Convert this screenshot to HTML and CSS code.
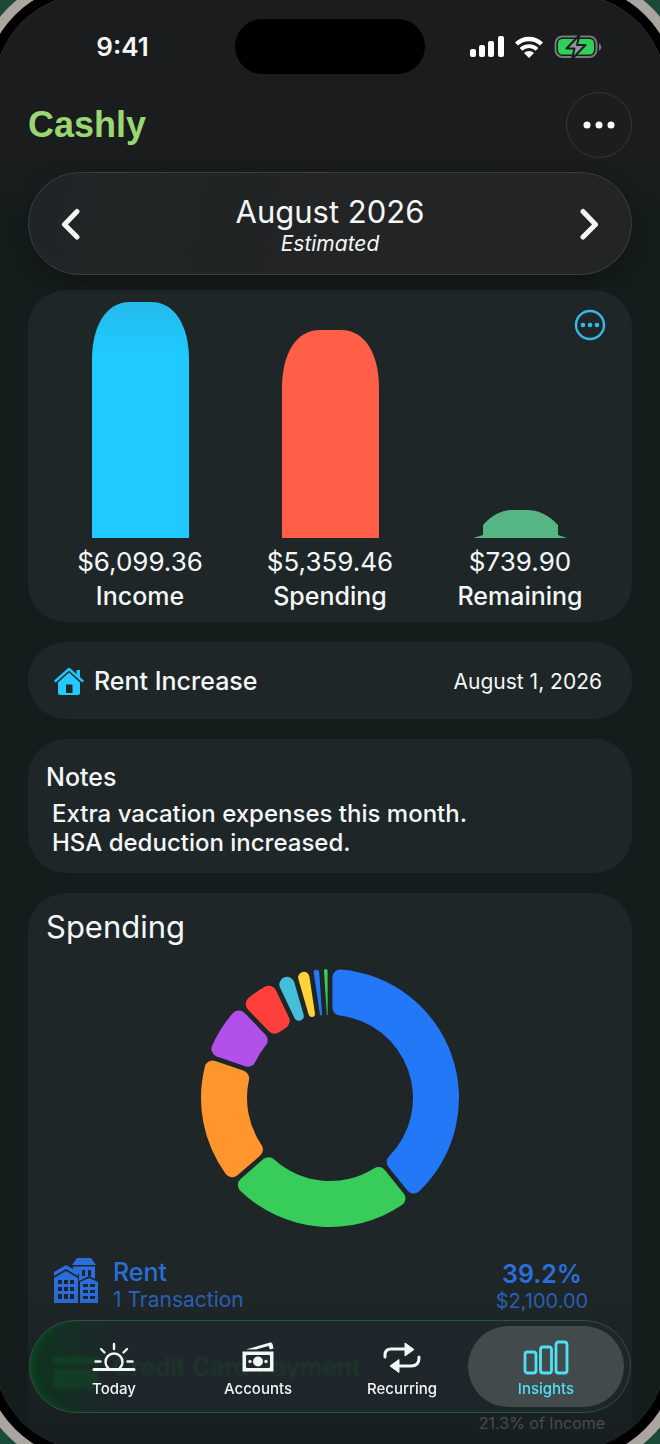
FILE: index.html
```html
<!DOCTYPE html>
<html lang="en">
<head>
    <meta charset="UTF-8">
    <meta name="viewport" content="width=device-width, initial-scale=1.0">
    <title>Cashly - Insights</title>
    <link rel="stylesheet" href="styles.css">
</head>
<body>
    <div class="phone">
        <div class="status-bar">
            <span class="time">9:41</span>
            <span class="island"></span>
            <span class="status-icons">
                <svg width="34" height="22" viewBox="0 0 34 22" fill="#fff">
                    <rect x="0" y="13" width="6" height="8" rx="2"/>
                    <rect x="9" y="9" width="6" height="12" rx="2"/>
                    <rect x="18" y="5" width="6" height="16" rx="2"/>
                    <rect x="28" y="0" width="6" height="21" rx="2"/>
                </svg>
                <svg width="30" height="22" viewBox="0 0 30 22" fill="none" stroke="#fff" stroke-width="4.400">
                    <path d="M2.500 8a18 18 0 0 1 25 0"/>
                    <path d="M7 13.300a11.500 11.500 0 0 1 16 0" stroke-width="3.800"/>
                    <path d="M15 22l-5-5a7 7 0 0 1 10 0z" fill="#fff" stroke="none"/>
                </svg>
                <svg width="48" height="24" viewBox="0 0 48 24">
                    <rect x="1.500" y="1.500" width="41" height="20.500" rx="7" fill="none" stroke="#77797a" stroke-width="2"/>
                    <path d="M45 8.500c3 1 3 6 0 7z" fill="#77797a"/>
                    <rect x="4" y="4" width="36" height="15.500" rx="4.500" fill="#30d158"/>
                    <path d="M25.500 0L12.500 13.500h8L18 24 31.500 10h-8.500z" fill="#929495" stroke="#1b1c1e" stroke-width="2" stroke-linejoin="round"/>
                </svg>
            </span>
        </div>

        <header class="header">
            <h1>Cashly</h1>
            <button type="button" class="menu-button" aria-label="Menu">
                <svg width="32" height="8" viewBox="0 0 32 8" fill="#fff">
                    <circle cx="4" cy="4" r="3.500"/>
                    <circle cx="16" cy="4" r="3.500"/>
                    <circle cx="28" cy="4" r="3.500"/>
                </svg>
            </button>
        </header>

        <nav class="month-nav">
            <button type="button" aria-label="Previous month">
                <svg width="20" height="32" viewBox="0 0 20 32"><path d="M16 3.500L3.500 16.500l12.500 12.500"/></svg>
            </button>
            <div class="month">
                <h2>August 2026</h2>
                <p>Estimated</p>
            </div>
            <button type="button" aria-label="Next month">
                <svg width="20" height="32" viewBox="0 0 20 32"><path d="M4 3.500L16.500 16.500 4 29"/></svg>
            </button>
        </nav>

        <main class="content">
            <section class="card summary">
                <div class="column">
                    <svg width="97" height="236" viewBox="0 0 97 236">
                        <defs>
                            <linearGradient id="income" x1="0" y1="0" x2="0" y2="1">
                                <stop offset="0" stop-color="#25b9eb"/>
                                <stop offset=".2" stop-color="#20c9ff"/>
                            </linearGradient>
                        </defs>
                        <path d="M0 236V58C0 24 14 0 38 0H59C83 0 97 24 97 58V236Z" fill="url(#income)"/>
                    </svg>
                    <span class="amount">$6,099.36</span>
                    <span class="name">Income</span>
                </div>
                <div class="column">
                    <svg width="97" height="208" viewBox="0 0 97 208">
                        <path d="M0 208V58C0 24 14 0 38 0H59C83 0 97 24 97 58V208Z" fill="#ff5f46"/>
                    </svg>
                    <span class="amount">$5,359.46</span>
                    <span class="name">Spending</span>
                </div>
                <div class="column">
                    <svg width="94" height="28" viewBox="0 0 94 28">
                        <path d="M0 28L10 25V15C20 4 30 0 40 0H54C64 0 75 4 85 15V25L94 28Z" fill="#55b583"/>
                    </svg>
                    <span class="amount">$739.90</span>
                    <span class="name">Remaining</span>
                </div>
                <button type="button" class="more" aria-label="Chart options">
                    <svg width="32" height="32" viewBox="0 0 32 32" fill="#34b9ea">
                        <circle cx="16" cy="16" r="14" fill="none" stroke="#34b9ea" stroke-width="2.400"/>
                        <circle cx="9" cy="16" r="2.300"/>
                        <circle cx="16" cy="16" r="2.300"/>
                        <circle cx="23" cy="16" r="2.300"/>
                    </svg>
                </button>
            </section>

            <section class="card event">
                <svg width="30" height="30" viewBox="0 0 30 30">
                    <path d="M1.500 14L15 2l13.500 12" fill="none" stroke="#23c3f7" stroke-width="2.400" stroke-linecap="round" stroke-linejoin="round"/>
                    <path d="M22.500 3H26v9l-3.500-3z" fill="#23c3f7"/>
                    <path d="M15 5.500L26 15.500V26q0 2-2 2H6q-2 0-2-2V15.500zM12 17.500V26h6.500v-8.500z" fill="#23c9ff" fill-rule="evenodd"/>
                </svg>
                <h3>Rent Increase</h3>
                <time datetime="2026-08-01">August 1, 2026</time>
            </section>

            <section class="card notes">
                <h3>Notes</h3>
                <p>Extra vacation expenses this month.<br>HSA deduction increased.</p>
            </section>

            <section class="card spending">
                <h2>Spending</h2>
                <svg id="donut" class="donut" width="260" height="260" viewBox="-130 -130 260 260"></svg>
                <ul class="categories">
                    <li class="rent">
                        <svg width="44" height="46" viewBox="0 0 44 46" fill="currentColor">
                            <path d="M23 0h14l5 7H18z"/>
                            <path fill-rule="evenodd" d="M19 8.500h22V21l-6-3-8 4-2 1V16l-6-4zM28 12v6h3v-6zm6 0v6h3v-6z"/>
                            <path d="M0 14L12 7l12 7v4l-12-7-12 7z"/>
                            <path fill-rule="evenodd" d="M0 20l12-7 12 7v25H0zM4 22v4h4v-4zm6 0v4h4v-4zm6 0v4h4v-4zM4 29v4h4v-4zm6 0v4h4v-4zm6 0v4h4v-4zM4 36v5h4v-5zm6 0v5h4v-5zm6 0v5h4v-5z"/>
                            <path fill-rule="evenodd" d="M26 24l9-4 9 4v21H26zM29 26v3h5v-3zm7 0v3h5v-3zm-7 6v3h5v-3zm7 0v3h5v-3zm-7 6v3h5v-3zm7 0v3h5v-3z"/>
                        </svg>
                        <div class="category">
                            <h3>Rent</h3>
                            <p>1 Transaction</p>
                        </div>
                        <div class="share">
                            <strong>39.2%</strong>
                            <span>$2,100.00</span>
                        </div>
                    </li>
                    <li class="credit">
                        <svg width="44" height="46" viewBox="0 0 44 46" fill="currentColor">
                            <rect x="0" y="4" width="44" height="7" rx="2"/>
                            <rect x="0" y="16" width="44" height="20" rx="3"/>
                        </svg>
                        <div class="category">
                            <h3>Credit Card Payment</h3>
                        </div>
                        <div class="share">
                            <small>21.3% of Income</small>
                        </div>
                    </li>
                </ul>
            </section>
        </main>

        <nav class="tab-bar">
            <a href="#today">
                <svg width="44" height="36" viewBox="0 0 44 36" fill="none" stroke="currentColor" stroke-width="2.400" stroke-linecap="round">
                    <path d="M2 30.500h40" stroke-width="3"/>
                    <path d="M16.500 29.500a8.500 8.500 0 1 1 11 0M22 5v5M9 10l3.500 3.500M35 10l-3.500 3.500M3.500 22.500h5M35.500 22.500h5"/>
                </svg>
                Today
            </a>
            <a href="#accounts">
                <svg width="34" height="36" viewBox="0 0 34 36" fill="currentColor">
                    <path d="M5 10.500L29 3.500q2-.500 2.500 1.500l1 4.500-3.500 1-1.500-3.500L15 10.500z"/>
                    <path fill-rule="evenodd" d="M1.500 12.500h31v20h-31zM5 17v11h0q0 1 1.500 1h21q1.500 0 1.500-1V17q0-1-1.500-1h-21q-1.500 0-1.500 1z"/>
                    <circle cx="17" cy="22.500" r="5"/>
                    <circle cx="9" cy="22.500" r="1.700"/>
                    <circle cx="25" cy="22.500" r="1.700"/>
                </svg>
                Accounts
            </a>
            <a href="#recurring">
                <svg width="38" height="36" viewBox="0 0 38 36" fill="currentColor">
                    <path d="M2 18v-2q0-6 6-6h15M36 18v1q0 8-8 8H15" fill="none" stroke="currentColor" stroke-width="3" stroke-linecap="round"/>
                    <path d="M22 4l9 6.500-9 6.500zM16 20.500L7 27l9 6.500z" stroke="currentColor" stroke-linejoin="round"/>
                </svg>
                Recurring
            </a>
            <a href="#insights" class="active">
                <svg width="46" height="36" viewBox="0 0 46 36" fill="none" stroke="currentColor" stroke-width="2.800">
                    <rect x="2" y="13" width="11" height="21" rx="2.500"/>
                    <rect x="17.500" y="8" width="11" height="26" rx="2.500"/>
                    <rect x="33" y="3" width="11" height="31" rx="2.500"/>
                </svg>
                Insights
            </a>
        </nav>
    </div>

    <script>
        // end is the angle in degrees, clockwise from the top
        const slices = [
            { end: 141.2, color: '#2378f8' },
            { end: 229, color: '#38cc5a' },
            { end: 289, color: '#ff962d' },
            { end: 316, color: '#b450ea' },
            { end: 334.5, color: '#ff3f3c' },
            { end: 344, color: '#45bedc' },
            { end: 351.5, color: '#ffd338' },
            { end: 356.2, color: '#2378f8' },
            { end: 360, color: '#38cc5a' }
        ];
        const outer = 129;
        const inner = 83;
        const side = 2.4; // half of the gap between slices
        const maxCorner = 8;

        const donut = document.getElementById('donut');
        const point = (radius, angle) => `${radius * Math.sin(angle)} ${-radius * Math.cos(angle)}`;

        let start = 0;
        slices.forEach(({ end, color }) => {
            const a = start * Math.PI / 180;
            const b = end * Math.PI / 180;
            const s = Math.sin((b - a) / 2);

            // thin slices get smaller corners
            const rOut = Math.min(maxCorner, (outer * s - side) / (1 + s));
            const rIn = Math.max(0, Math.min(maxCorner, (inner * s - side) / (1 - s)));

            // where the corners touch the arcs
            const arcOut = Math.asin((side + rOut) / (outer - rOut));
            const arcIn = Math.asin((side + rIn) / (inner + rIn));

            // where the corners touch the straight sides
            const lineOut = Math.sqrt((outer - rOut) ** 2 - (side + rOut) ** 2);
            const lineIn = Math.sqrt((inner + rIn) ** 2 - (side + rIn) ** 2);
            const distOut = Math.hypot(lineOut, side);
            const distIn = Math.hypot(lineIn, side);
            const sideOut = Math.atan2(side, lineOut);
            const sideIn = Math.atan2(side, lineIn);

            const path = document.createElementNS('http://www.w3.org/2000/svg', 'path');
            path.setAttribute('d', [
                `M${point(distOut, a + sideOut)}`,
                `A${rOut} ${rOut} 0 0 1 ${point(outer, a + arcOut)}`,
                `A${outer} ${outer} 0 0 1 ${point(outer, b - arcOut)}`,
                `A${rOut} ${rOut} 0 0 1 ${point(distOut, b - sideOut)}`,
                `L${point(distIn, b - sideIn)}`,
                `A${rIn} ${rIn} 0 0 1 ${point(inner, b - arcIn)}`,
                `A${inner} ${inner} 0 0 0 ${point(inner, a + arcIn)}`,
                `A${rIn} ${rIn} 0 0 1 ${point(distIn, a + sideIn)}Z`
            ].join(' '));
            path.setAttribute('fill', color);
            donut.appendChild(path);
            start = end;
        });
    </script>
</body>
</html>
```
FILE: styles.css
```css
* {
    box-sizing: border-box;
}

html {
    background-color: #1c4a38;
}

body {
    margin: 0;
    display: flow-root;
    height: 100vh;
    overflow: hidden;
    font-family: Inter, "Liberation Sans", sans-serif;
    color: #f5f7f7;
}

h1, h2, h3, p, ul {
    margin: 0;
    padding: 0;
}

button {
    display: flex;
    align-items: center;
    justify-content: center;
    padding: 0;
    border: none;
    background: none;
    cursor: pointer;
}

svg {
    display: block;
    flex-shrink: 0;
}

.phone {
    position: relative;
    height: calc(100vh + 12px);
    margin: -6px;
    padding: 6px;
    overflow: hidden;
    border-radius: 96px;
    background: linear-gradient(#1b1c1e 150px, #151d1c 230px);
    box-shadow: 0 0 0 10px #000, 0 0 0 20px #aaa69f;
}

/* fades the list out behind the tab bar */
.phone::after {
    content: "";
    position: absolute;
    left: 0;
    right: 0;
    bottom: 0;
    height: 160px;
    background: linear-gradient(rgba(21, 27, 28, 0), rgba(21, 27, 28, 0.7));
}

.status-bar {
    display: grid;
    grid-template-columns: 1fr 190px 1fr;
    align-items: center;
    padding: 19px 0 18px;
}

.time {
    padding-left: 10px;
    font-size: 26px;
    font-weight: 600;
    text-align: center;
}

.island {
    height: 55px;
    border-radius: 28px;
    background-color: #000;
}

.status-icons {
    display: flex;
    align-items: center;
    justify-content: center;
    gap: 10px;
    padding-right: 14px;
}

.header {
    display: flex;
    align-items: center;
    justify-content: space-between;
    padding: 0 28px;
}

h1 {
    font-family: "Liberation Sans", sans-serif;
    font-size: 36px;
    font-weight: 700;
    color: #99d871;
}

.menu-button {
    width: 66px;
    height: 66px;
    border: 1px solid #323635;
    border-radius: 50%;
    background-color: #1c1e1e;
}

.month-nav {
    display: flex;
    align-items: center;
    justify-content: space-between;
    margin: 14px 28px 15px;
    padding: 19px 32px 18px;
    border: 1px solid #3a4040;
    border-radius: 52px;
    background: linear-gradient(100deg, #1f2526, #222425 50%);
    box-shadow: 0 8px 20px rgba(0, 0, 0, 0.3);
    text-align: center;
}

.month-nav path {
    fill: none;
    stroke: #f5f7f7;
    stroke-width: 5;
    stroke-linecap: round;
    stroke-linejoin: round;
}

.month h2 {
    font-size: 31px;
    font-weight: 400;
    line-height: 40px;
}

.month p {
    font-size: 21px;
    font-style: italic;
    line-height: 24px;
}

.content {
    display: flex;
    flex-direction: column;
    gap: 20px;
    padding: 0 28px;
}

.card {
    border-radius: 38px;
    background-color: #1f2628;
}

.card h3 {
    font-size: 25px;
    font-weight: 500;
}

.summary {
    position: relative;
    display: grid;
    grid-template-columns: repeat(3, 1fr);
    align-items: end;
    padding: 12px 17px 8px;
}

.column {
    display: flex;
    flex-direction: column;
    align-items: center;
    line-height: 35px;
}

.column svg {
    margin-bottom: 6px;
}

.amount {
    font-size: 26px;
}

.name {
    font-size: 25px;
    font-weight: 500;
}

.more {
    position: absolute;
    top: 19px;
    right: 26px;
}

.event {
    display: flex;
    align-items: center;
    gap: 10px;
    padding: 21px 30px 19px 26px;
    line-height: 37px;
}

.event time {
    margin-left: auto;
    font-size: 21px;
}

.notes {
    padding: 20px 18px 16px;
}

.notes h3 {
    line-height: 36px;
}

.notes p {
    padding: 4px 6px 0;
    font-size: 24px;
    font-weight: 500;
    line-height: 29px;
}

.spending {
    padding: 14px 18px 24px;
}

.spending h2 {
    font-size: 31px;
    font-weight: 400;
    line-height: 40px;
}

.donut {
    margin: 21px auto 28px;
}

.categories {
    list-style: none;
    display: flex;
    flex-direction: column;
    gap: 36px;
}

.categories li {
    display: flex;
    align-items: flex-start;
    gap: 15px;
    padding: 2px 6px 0 8px;
    color: #2a6edb;
}

.category {
    flex: 1;
    line-height: 28px;
}

.category p {
    font-size: 21px;
    color: #2b62bb;
}

.share {
    display: flex;
    flex-direction: column;
    align-items: center;
    width: 132px;
    line-height: 27px;
}

.share strong {
    padding-top: 3px;
    font-size: 25px;
    font-weight: 600;
}

.share span {
    font-size: 20px;
    color: #2b62bb;
}

.share small {
    padding-top: 57px;
    font-size: 16px;
    color: #8a9092;
    white-space: nowrap;
}

.categories .credit {
    color: #0a7a26;
}

.tab-bar {
    position: absolute;
    z-index: 1;
    left: 35px;
    right: 35px;
    bottom: 37px;
    display: flex;
    padding: 5px 12px;
    border: 1px solid #2b5244;
    border-radius: 47px;
    background: linear-gradient(90deg, rgba(8, 62, 26, 0.7), rgba(33, 40, 47, 0.7) 14%);
    box-shadow: inset 6px 0 8px -4px #0b5022;
    backdrop-filter: blur(1px);
}

.tab-bar a {
    flex: none;
    width: 25%;
    display: flex;
    flex-direction: column;
    align-items: center;
    gap: 4px;
    padding: 13px 0 8px;
    font-size: 15px;
    font-weight: 500;
    line-height: 20px;
    color: #f0f7f4;
    text-decoration: none;
}

.tab-bar .active {
    width: calc(25% + 12px);
    margin: 0 -6px;
    border-radius: 41px;
    background-color: #424a4c;
    color: #4fe0f5;
}
```
